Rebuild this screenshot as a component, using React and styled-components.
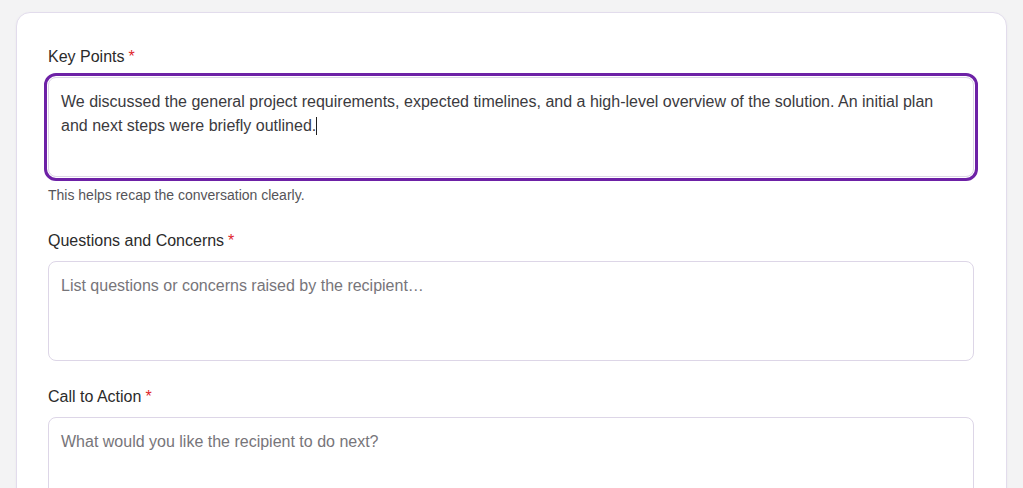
import React, { useEffect, useRef } from "react";
import styled, { createGlobalStyle, css } from "styled-components";

const GlobalStyle = createGlobalStyle`
  * { box-sizing: border-box; }
  html, body {
    margin: 0;
    padding: 0;
    background: #f3f3f4;
    font-family: "Liberation Sans", Arial, sans-serif;
  }
`;

const Page = styled.div`
  padding: 12px 16px 0;
  min-height: 488px;
`;

const Card = styled.form`
  background: #ffffff;
  border: 1px solid #e2dcec;
  border-radius: 14px;
  padding: 32px 32px 40px 31px;
  display: flex;
  flex-direction: column;
  gap: 24px;
  box-shadow: 0 1px 3px rgba(60, 40, 90, 0.05);
`;

const Field = styled.div`
  display: flex;
  flex-direction: column;
`;

const Label = styled.label`
  font-size: 16px;
  line-height: 24px;
  color: #2b2b2b;
  margin-bottom: 8px;
`;

const Required = styled.span`
  color: #e0262c;
  margin-left: 4px;
`;

const InputWrap = styled.div`
  position: relative;
`;

const Caret = styled.span`
  position: absolute;
  left: 268px;
  top: 40px;
  width: 1px;
  height: 18px;
  background: #1f1f1f;
  pointer-events: none;
`;

const TextArea = styled.textarea`
  display: block;
  width: 100%;
  height: 100px;
  resize: none;
  border: 1px solid #ddd6e7;
  border-radius: 8px;
  padding: 12px;
  font-family: "Liberation Sans", Arial, sans-serif;
  font-size: 16px;
  line-height: 24px;
  color: #3b3a3e;
  background: #fff;
  outline: none;
  caret-color: transparent;

  &::placeholder {
    color: #77757a;
  }

  ${(p) =>
    p.$active &&
    css`
      outline: 3px solid #6d21a6;
      outline-offset: 1px;
    `}
`;

const Helper = styled.p`
  margin: 8px 0 0;
  font-size: 14px;
  line-height: 20px;
  color: #555459;
`;

export default function App() {
  const ref = useRef(null);
  useEffect(() => {
    const el = ref.current;
    if (el) {
      el.focus();
      const n = el.value.length;
      el.setSelectionRange(n, n);
    }
  }, []);

  return (
    <>
      <GlobalStyle />
      <Page>
        <Card onSubmit={(e) => e.preventDefault()}>
          <Field>
            <Label htmlFor="key-points">
              Key Points<Required>*</Required>
            </Label>
            <InputWrap>
              <TextArea
                id="key-points"
                ref={ref}
                $active
                defaultValue="We discussed the general project requirements, expected timelines, and a high-level overview of the solution. An initial plan and next steps were briefly outlined."
              />
              <Caret />
            </InputWrap>
            <Helper>This helps recap the conversation clearly.</Helper>
          </Field>
          <Field>
            <Label htmlFor="questions">
              Questions and Concerns<Required>*</Required>
            </Label>
            <TextArea
              id="questions"
              placeholder="List questions or concerns raised by the recipient…"
            />
          </Field>
          <Field>
            <Label htmlFor="cta">
              Call to Action<Required>*</Required>
            </Label>
            <TextArea
              id="cta"
              placeholder="What would you like the recipient to do next?"
            />
          </Field>
        </Card>
      </Page>
    </>
  );
}
